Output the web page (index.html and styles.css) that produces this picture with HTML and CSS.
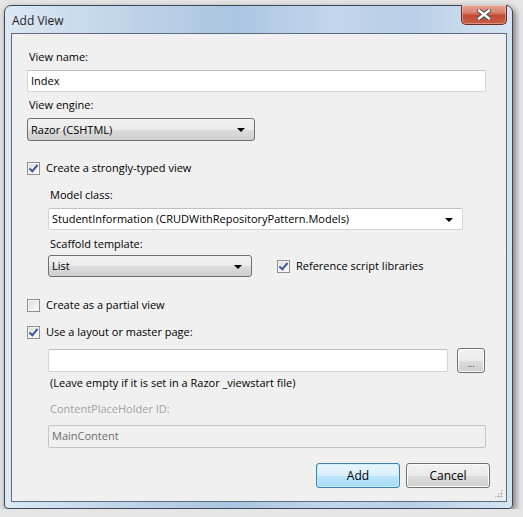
FILE: index.html
```html
<!DOCTYPE html>
<html lang="en">
<head>
    <meta charset="UTF-8">
    <title>Add View</title>
    <link rel="stylesheet" href="styles.css">
</head>
<body>
    <div class="window">
        <div class="titlebar">
            <span class="title">Add View</span>
            <button class="close-btn">
                <svg width="14" height="11" viewBox="0 0 14 11">
                    <path d="M2 1.5 L12 9.5 M12 1.5 L2 9.5" stroke="#4a4a4a" stroke-width="4.4" stroke-linecap="square"/>
                    <path d="M2 1.5 L12 9.5 M12 1.5 L2 9.5" stroke="#fff" stroke-width="2.4" stroke-linecap="square"/>
                </svg>
            </button>
        </div>

        <div class="client">
            <div class="label first">View name:</div>
            <div class="textbox wide">Index</div>

            <div class="label">View engine:</div>
            <div class="combo engine">Razor (CSHTML)<span class="arrow"></span></div>

            <label class="check-row typed"><span class="check on"></span>Create a strongly-typed view</label>

            <div class="indent">
                <div class="label model-lbl">Model class:</div>
                <div class="combo editable model">StudentInformation (CRUDWithRepositoryPattern.Models)<span class="arrow"></span></div>

                <div class="label scaffold-lbl">Scaffold template:</div>
                <div class="scaffold-row">
                    <div class="combo scaffold">List<span class="arrow"></span></div>
                    <label class="check-row"><span class="check on"></span>Reference script libraries</label>
                </div>
            </div>

            <label class="check-row partial"><span class="check"></span>Create as a partial view</label>
            <label class="check-row layout"><span class="check on"></span>Use a layout or master page:</label>

            <div class="indent">
                <div class="layout-row">
                    <div class="textbox layout-box"></div>
                    <button class="btn browse">...</button>
                </div>
                <div class="label hint">(Leave empty if it is set in a Razor _viewstart file)</div>
                <div class="label disabled placeholder-lbl">ContentPlaceHolder ID:</div>
                <div class="textbox disabled-box">MainContent</div>
            </div>

            <div class="actions">
                <button class="btn default">Add</button>
                <button class="btn">Cancel</button>
            </div>
            <div class="grip"></div>
        </div>
    </div>
</body>
</html>
```

FILE: styles.css
```css
body {
    margin: 0;
    background: #e6e6e6;
    font-family: "Segoe UI", "Open Sans", "Noto Sans", sans-serif;
    font-size: 11px;
    color: #000;
}

.window {
    margin: 5px 0 0 4px;
    width: 509px;
    border-radius: 7px 7px 4px 4px;
    border: 1px solid #3c4858;
    box-sizing: border-box;
    background: linear-gradient(90deg, #dce8f4 0%, #c3d6ea 20%, #abc6e2 45%, #c2d6ec 65%, #b8cfe7 80%, #d6e4f2 100%);
    box-shadow: 2px 3px 7px rgba(0,0,0,0.55);
    padding: 0 5px 6px 6px;
}

.titlebar {
    height: 27px;
    display: flex;
    align-items: flex-start;
    justify-content: space-between;
}

.title {
    margin-top: 6px;
    margin-left: 1px;
    font-size: 12px;
    color: #1e1e1e;
}

.close-btn {
    margin-top: -1px;
    margin-right: 0;
    width: 46px;
    height: 20px;
    border: 1px solid #6b2a22;
    border-top: none;
    border-radius: 0 0 5px 5px;
    background: linear-gradient(#e9a898 0%, #d8806c 40%, #c24a36 55%, #c95c44 100%);
    box-shadow: inset 0 0 0 1px rgba(255,255,255,0.35);
    display: flex;
    align-items: center;
    justify-content: center;
    padding: 0;
}

.client {
    position: relative;
    background: #f0f0f0;
    border: 1px solid #5e6c7c;
    padding: 15px 20px 13px 15px;
    display: flex;
    flex-direction: column;
}

.label {
    line-height: 16px;
    height: 16px;
    margin-top: 5px;
    padding-left: 2px;
    white-space: nowrap;
}

.label.first {
    margin-top: 0;
}

.textbox {
    height: 22px;
    box-sizing: border-box;
    background: #fff;
    border: 1px solid #d5d5d5;
    border-top-color: #c0c0c0;
    border-radius: 2px;
    padding: 0 3px;
    line-height: 20px;
    margin-top: 5px;
}

.combo {
    position: relative;
    height: 23px;
    box-sizing: border-box;
    border: 1px solid #707070;
    border-radius: 3px;
    background: linear-gradient(#f2f2f2 0%, #ebebeb 50%, #dddddd 51%, #cfcfcf 100%);
    padding: 0 3px;
    line-height: 21px;
    margin-top: 5px;
}

.combo.editable {
    background: #fff;
    border: 1px solid #d5d5d5;
    border-top-color: #c0c0c0;
    border-radius: 2px;
    height: 22px;
    line-height: 20px;
}

.arrow {
    position: absolute;
    right: 9px;
    top: 9px;
    border-left: 4px solid transparent;
    border-right: 4px solid transparent;
    border-top: 4px solid #000;
}

.engine {
    width: 228px;
}

.check-row {
    display: flex;
    align-items: center;
    height: 16px;
    line-height: 16px;
    white-space: nowrap;
}

.check {
    width: 13px;
    height: 13px;
    box-sizing: border-box;
    border: 1px solid #8e8f8f;
    background: linear-gradient(135deg, #dcdcdc, #fbfbfb);
    box-shadow: inset 0 0 0 1px #f4f4f4;
    margin-right: 6px;
    position: relative;
}

.check.on::after {
    content: "";
    position: absolute;
    left: 3px;
    top: 0;
    width: 3px;
    height: 7px;
    border-right: 2px solid #3f5a99;
    border-bottom: 2px solid #3f5a99;
    transform: rotate(40deg);
}

.typed {
    margin-top: 19px;
}

.indent {
    padding-left: 21px;
    display: flex;
    flex-direction: column;
}

.model-lbl {
    margin-top: 11px;
}

.model {
    width: 415px;
}

.scaffold-lbl {
    margin-top: 6px;
}

.scaffold-row {
    display: flex;
    align-items: center;
    margin-top: 3px;
}

.scaffold {
    width: 204px;
    margin-top: 0;
    height: 22px;
    line-height: 20px;
    margin-right: 25px;
}

.partial {
    margin-top: 20px;
}

.layout {
    margin-top: 11px;
}

.layout-row {
    display: flex;
    align-items: center;
    margin-top: 8px;
}

.layout-box {
    width: 400px;
    margin-top: 0;
    height: 23px;
}

.btn {
    height: 25px;
    box-sizing: border-box;
    border: 1px solid #707070;
    border-radius: 3px;
    background: linear-gradient(#f2f2f2 0%, #ebebeb 50%, #dddddd 51%, #cfcfcf 100%);
    box-shadow: inset 0 0 0 1px #fcfcfc;
    font-family: inherit;
    font-size: 12px;
    color: #000;
    padding: 0;
}

.browse {
    width: 28px;
    margin-left: 9px;
    font-size: 9px;
    line-height: 9px;
    padding-top: 5px;
    color: #333;
}

.hint {
    margin-top: 2px;
}

.disabled {
    color: #a3a3a3;
}

.placeholder-lbl {
    margin-top: 10px;
}

.disabled-box {
    margin-top: 8px;
    background: #f0f0f0;
    border-color: #c4c4c4;
    color: #6d6d6d;
    width: 438px;
    height: 23px;
}

.actions {
    display: flex;
    justify-content: flex-end;
    gap: 6px;
    margin-top: 15px;
    padding-right: 1px;
    margin-right: -5px;
}

.actions .btn {
    width: 84px;
}

.btn.default {
    border-color: #3c7fb1;
    background: linear-gradient(#eaf6fd 0%, #d9f0fc 50%, #bee6fd 51%, #a7d9f5 100%);
    box-shadow: inset 0 0 0 1px #c9f0ff;
}

.grip {
    position: absolute;
    right: 3px;
    bottom: 3px;
    width: 9px;
    height: 9px;
    background-image: radial-gradient(circle, #a8a8a8 0.8px, transparent 1.2px);
    background-size: 3px 3px;
    clip-path: polygon(100% 0, 100% 100%, 0 100%);
}
```
